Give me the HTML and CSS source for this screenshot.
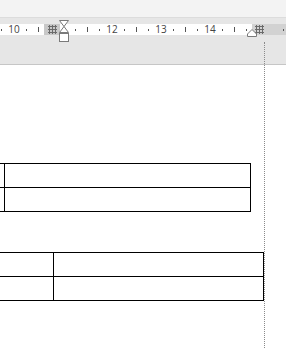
FILE: index.html
```html
<!DOCTYPE html>
<html lang="en">
<head>
  <meta charset="UTF-8">
  <title>Ruler and tables</title>
  <link rel="stylesheet" href="styles.css">
</head>
<body>
  <div class="toolbar"></div>

  <div class="ruler-area">
    <div class="ruler">
      <div class="col-marker left">
        <svg width="9" height="9" viewBox="0 0 9 9"><path d="M0 1.5H9M0 4.5H9M0 7.5H9M1.5 0V9M4.5 0V9M7.5 0V9" stroke="#6a6a6a" stroke-width="1"/></svg>
      </div>
      <div class="col-marker right">
        <svg width="9" height="9" viewBox="0 0 9 9"><path d="M0 1.5H9M0 4.5H9M0 7.5H9M1.5 0V9M4.5 0V9M7.5 0V9" stroke="#6a6a6a" stroke-width="1"/></svg>
      </div>
      <div class="marks">
        <span class="dot"></span><span class="num">10</span><span class="dot"></span><span class="tick"></span><span></span>
        <span></span><span class="dot"></span><span class="tick"></span><span class="dot"></span>
        <span class="num">12</span><span class="dot"></span><span class="tick"></span><span class="dot"></span>
        <span class="num">13</span><span class="dot"></span><span class="tick"></span><span class="dot"></span>
        <span class="num">14</span><span class="dot"></span><span class="tick"></span><span class="dot"></span>
        <span></span><span></span><span class="dot"></span><span class="tick"></span>
      </div>
    </div>
    <svg class="indent" width="12" height="24" viewBox="0 0 12 24">
      <path d="M1.5 0.5H10.5L6 6.5Z M6 6.5L10.5 12.5H1.5Z" fill="#fff" stroke="#7a7a7a" stroke-width="1"/>
      <rect x="1.5" y="13.5" width="9" height="8" fill="#fff" stroke="#7a7a7a" stroke-width="1"/>
    </svg>
    <svg class="right-indent" width="10" height="8" viewBox="0 0 10 8">
      <path d="M5 0.5L9.5 5V7.5H0.5V5Z" fill="#fff" stroke="#7a7a7a" stroke-width="1"/>
    </svg>
  </div>

  <div class="page">
    <table class="grid first">
      <tr><td class="narrow"></td><td></td></tr>
      <tr><td class="narrow"></td><td></td></tr>
    </table>
    <table class="grid second">
      <tr><td class="narrow"></td><td></td></tr>
      <tr><td class="narrow"></td><td></td></tr>
    </table>
  </div>

  <div class="margin-guide"></div>
</body>
</html>
```

FILE: styles.css
```css
body {
  margin: 0;
  width: 286px;
  height: 348px;
  overflow: hidden;
  position: relative;
  background: #fff;
  font-family: "Open Sans", "Noto Sans", sans-serif;
}
.toolbar {
  height: 17px;
  background: #f3f3f3;
  border-bottom: 1px solid #dcdcdc;
}
.ruler-area {
  position: relative;
  height: 47px;
  padding-top: 6px;
  background: #e6e6e6;
  border-bottom: 1px solid #c6c6c6;
  box-sizing: border-box;
}
.ruler {
  position: relative;
  height: 11px;
  background: #fff;
}
.col-marker {
  position: absolute;
  top: 0;
  height: 11px;
  background: #c8c8c8;
  display: flex;
  align-items: center;
}
.col-marker.left {
  left: 44px;
  width: 16px;
  padding-left: 4px;
  box-sizing: border-box;
}
.col-marker.right {
  left: 252px;
  width: 34px;
  padding-left: 3px;
  box-sizing: border-box;
  background: #d2d2d2;
}
.marks {
  position: relative;
  display: flex;
  height: 11px;
  margin-left: -4.375px;
}
.marks span {
  flex: 0 0 12.25px;
  display: flex;
  align-items: center;
  justify-content: center;
}
.marks .dot::before {
  content: "";
  width: 1px;
  height: 2px;
  background: #555;
}
.marks .tick::before {
  content: "";
  width: 1px;
  height: 5px;
  background: #555;
}
.marks .num {
  font-size: 10px;
  line-height: 11px;
  color: #444;
}
.indent {
  position: absolute;
  left: 58px;
  top: 2px;
}
.right-indent {
  position: absolute;
  left: 247px;
  top: 11px;
}
.page {
  padding-top: 98px;
  overflow: hidden;
}
.grid {
  border-collapse: collapse;
}
.grid td {
  border: 1px solid #000;
  height: 23px;
  padding: 0;
}
.first {
  margin-left: -16px;
  width: 267px;
}
.first .narrow {
  width: 19px;
}
.second {
  margin-top: 40px;
  margin-left: -40px;
  width: 304px;
}
.second .narrow {
  width: 92px;
}
.margin-guide {
  position: absolute;
  left: 264px;
  top: 42px;
  bottom: 0;
  border-left: 1px dotted #8a8a8a;
}
```
